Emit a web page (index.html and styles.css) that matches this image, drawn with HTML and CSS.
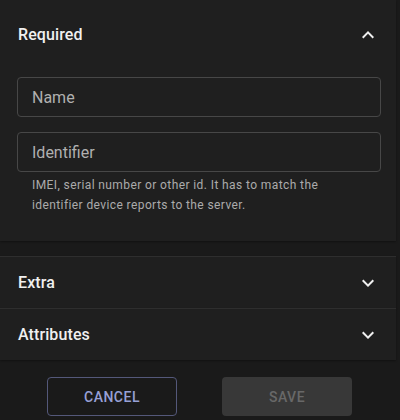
FILE: index.html
```html
<!DOCTYPE html>
<html>
<head>
<meta charset="utf-8">
<link rel="stylesheet" href="styles.css">
</head>
<body>
<div class="page">
  <div class="panel expanded">
    <div class="summary summary-open">
      <span class="title">Required</span>
      <svg class="chev up" viewBox="0 0 24 24" width="24" height="24"><path d="M16.59 8.59 12 13.17 7.41 8.59 6 10l6 6 6-6z"/></svg>
    </div>
    <div class="details">
      <div class="field"><span class="label">Name</span></div>
      <div class="field second"><span class="label">Identifier</span></div>
      <p class="helper">IMEI, serial number or other id. It has to match the identifier device reports to the server.</p>
    </div>
  </div>
  <div class="panel collapsed">
    <div class="summary">
      <span class="title">Extra</span>
      <svg class="chev" viewBox="0 0 24 24" width="24" height="24"><path d="M16.59 8.59 12 13.17 7.41 8.59 6 10l6 6 6-6z"/></svg>
    </div>
  </div>
  <div class="panel collapsed">
    <div class="summary">
      <span class="title">Attributes</span>
      <svg class="chev" viewBox="0 0 24 24" width="24" height="24"><path d="M16.59 8.59 12 13.17 7.41 8.59 6 10l6 6 6-6z"/></svg>
    </div>
  </div>
  <div class="actions">
    <button class="btn cancel">CANCEL</button>
    <button class="btn save">SAVE</button>
  </div>
</div>
</body>
</html>
```
FILE: styles.css
```css
* { box-sizing: border-box; }
html, body { margin: 0; padding: 0; background: #1a1a1a; }
body { font-family: Roboto, "Noto Sans", Arial, sans-serif; color: #fff; width: 400px; height: 420px; overflow: hidden; }
.page { width: 396px; }
.panel { background: #1f1f1f; box-shadow: 0 1px 2px rgba(0,0,0,0.35); }
.panel.expanded { height: 241px; margin-bottom: 15px; }
.panel.collapsed { border-top: 1px solid #2e2e2e; }
.summary { display: flex; align-items: center; justify-content: space-between; padding: 0 16px 0 18px; height: 51px; }
.summary-open { height: 69px; }
.title { font-size: 16px; font-weight: 500; letter-spacing: 0.1px; color: #f0f0f0; }
.chev { fill: #f0f0f0; margin-right: 0; }
.chev.up { transform: rotate(180deg); }
.details { padding: 8px 15px 16px 17px; }
.field { height: 40px; border: 1px solid #474747; border-radius: 4px; display: flex; align-items: center; padding-left: 14px; }
.field.second { margin-top: 15px; }
.label { font-size: 16px; color: #b0b0b0; }
.helper { margin: 3px 0 0 15px; max-width: 300px; font-size: 12px; line-height: 20px; color: #ababab; letter-spacing: 0.4px; }
.actions { display: flex; justify-content: center; gap: 45px; padding-top: 17px; padding-left: 3px; }
.btn { width: 130px; height: 39px; border-radius: 4px; font-family: Roboto, Arial, sans-serif; font-size: 14px; font-weight: 500; letter-spacing: 0.5px; }
.cancel { background: transparent; border: 1px solid #54587a; color: #97a0d6; }
.save { background: #383838; border: none; color: #686868; }
```
